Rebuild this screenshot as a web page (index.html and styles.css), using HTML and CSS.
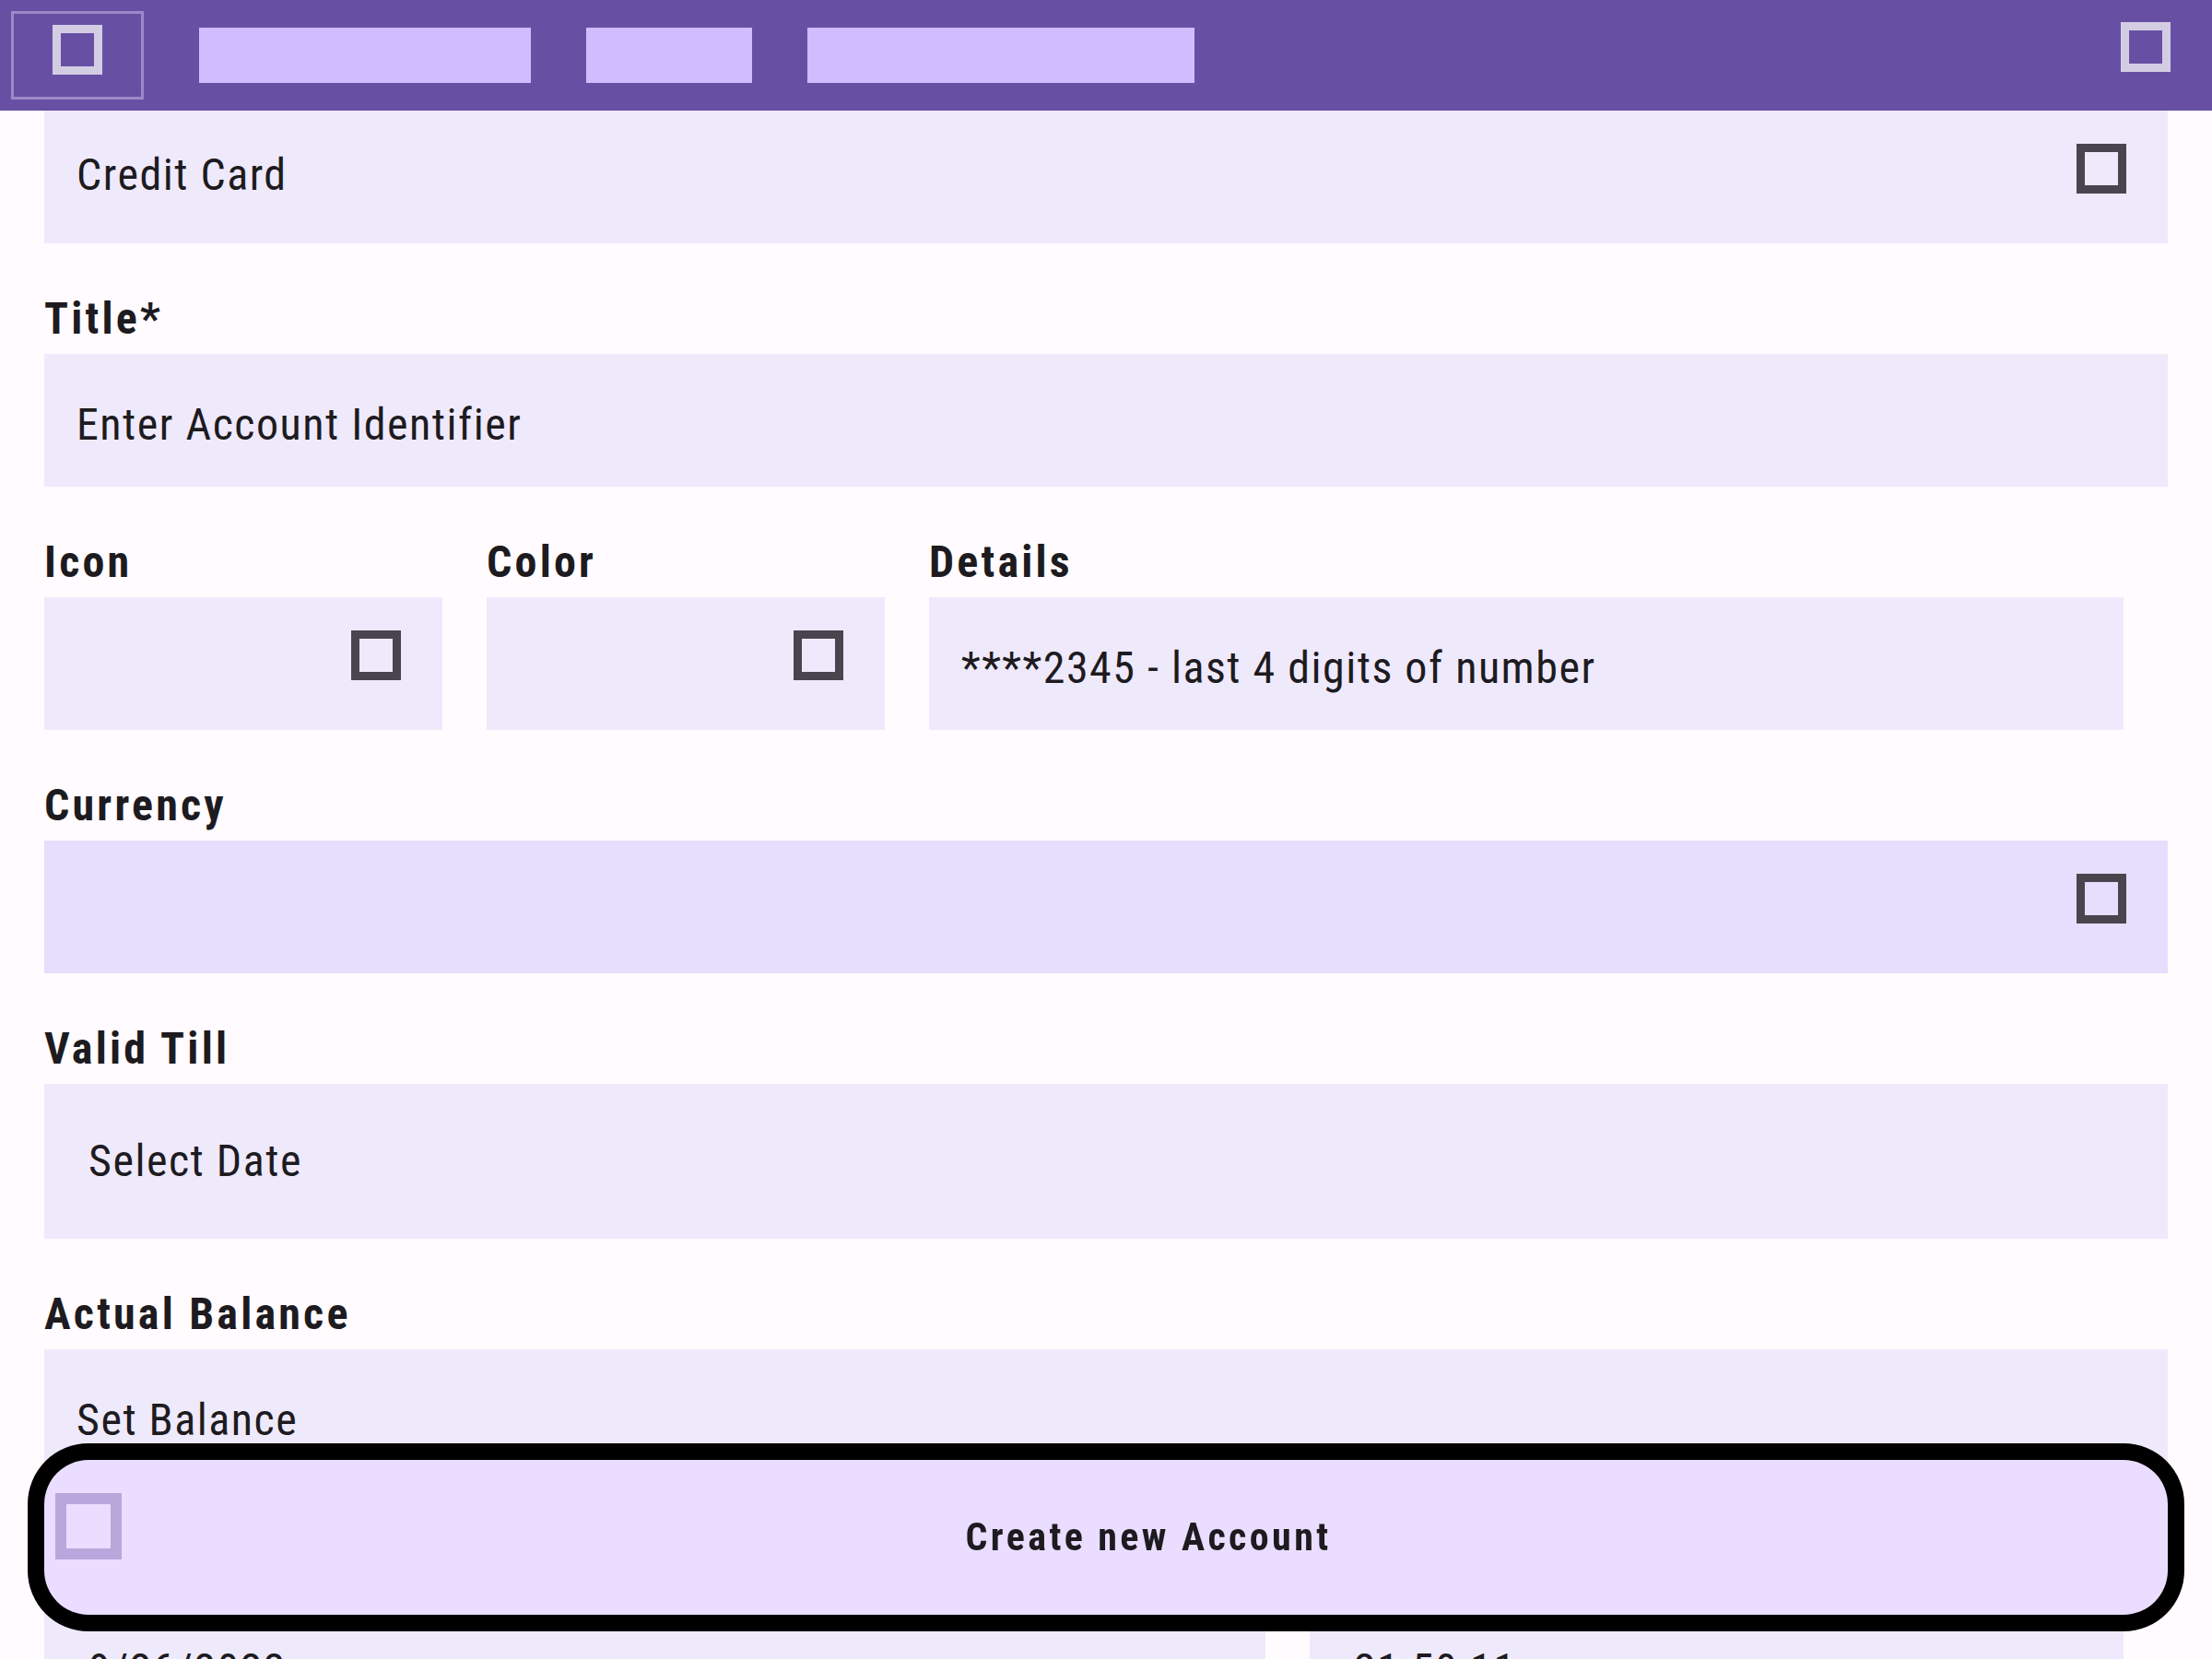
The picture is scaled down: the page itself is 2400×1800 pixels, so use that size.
FILE: index.html
```html
<!DOCTYPE html>
<html lang="en">
<head>
<meta charset="utf-8">
<title>Create new Account</title>
<link rel="stylesheet" href="styles.css">
</head>
<body>
<header class="appbar">
  <div class="nav-btn"><span class="glyph glyph-light"></span></div>
  <nav class="tabs">
    <span class="tab tab-wide"></span>
    <span class="tab tab-small"></span>
    <span class="tab tab-large"></span>
  </nav>
  <span class="glyph glyph-light appbar-action"></span>
</header>

<main class="form">
  <div class="field field-select">
    <span class="field-text">Credit Card</span>
    <span class="glyph glyph-dark field-icon"></span>
  </div>

  <label class="label">Title*</label>
  <div class="field">
    <span class="field-text">Enter Account Identifier</span>
  </div>

  <div class="row row-three">
    <div class="col">
      <label class="label">Icon</label>
      <div class="field field-compact">
        <span class="field-text"></span>
        <span class="glyph glyph-dark field-icon"></span>
      </div>
    </div>
    <div class="col">
      <label class="label">Color</label>
      <div class="field field-compact">
        <span class="field-text"></span>
        <span class="glyph glyph-dark field-icon"></span>
      </div>
    </div>
    <div class="col">
      <label class="label">Details</label>
      <div class="field">
        <span class="field-text">****2345 - last 4 digits of number</span>
      </div>
    </div>
  </div>

  <label class="label">Currency</label>
  <div class="field field-strong">
    <span class="field-text"></span>
    <span class="glyph glyph-dark field-icon"></span>
  </div>

  <label class="label">Valid Till</label>
  <div class="field field-date">
    <span class="field-text">Select Date</span>
  </div>

  <label class="label">Actual Balance</label>
  <div class="field">
    <span class="field-text">Set Balance</span>
  </div>

  <div class="row row-two">
    <div class="col">
      <label class="label">&nbsp;</label>
      <div class="field field-date">
        <span class="field-text">9/26/2023</span>
      </div>
    </div>
    <div class="col">
      <label class="label">&nbsp;</label>
      <div class="field field-date">
        <span class="field-text">21:50:11</span>
      </div>
    </div>
  </div>
</main>

<button class="fab-wide" type="button">
  <span class="glyph glyph-soft fab-icon"></span>
  <span class="fab-label">Create new Account</span>
</button>
</body>
</html>
```

FILE: styles.css
```css
html, body {
  margin: 0;
  padding: 0;
}

body {
  width: 2400px;
  height: 1800px;
  overflow: hidden;
  background: #fffbfe;
  color: #1d1b20;
  font-family: "Roboto Condensed", Roboto, "Noto Sans", "Liberation Sans", sans-serif;
}

/* generic square glyph (missing-icon box) */
.glyph {
  display: block;
  box-sizing: border-box;
  width: 54px;
  height: 54px;
  border: 9px solid currentColor;
  flex: none;
}
.glyph-light { color: #d3cde4; }
.glyph-dark { color: #49454f; }
.glyph-soft { color: #b8a7dc; }

/* ---------- app bar ---------- */
.appbar {
  height: 120px;
  background: #6750a4;
  display: flex;
  align-items: center;
  padding-left: 12px;
  padding-right: 45px;
}

.nav-btn {
  box-sizing: border-box;
  width: 144px;
  height: 96px;
  border: 3px solid #9a8ac8;
  display: flex;
  justify-content: center;
  align-items: flex-start;
  padding-top: 12px;
}

.tabs {
  display: flex;
  gap: 60px;
  margin-left: 60px;
  flex: 1;
}

.tab {
  display: block;
  height: 60px;
  background: #d0bcff;
}
.tab-wide { width: 360px; }
.tab-small { width: 180px; }
.tab-large { width: 420px; }

.appbar-action {
  align-self: flex-start;
  margin-top: 24px;
}

/* ---------- form ---------- */
.form {
  padding: 0 48px;
  display: flex;
  flex-direction: column;
}

.label {
  display: block;
  font-size: 48px;
  line-height: 56px;
  font-weight: 700;
  letter-spacing: 3.2px;
  margin-top: 54px;
  margin-bottom: 10px;
}

.field {
  box-sizing: border-box;
  height: 144px;
  background: #efe9fc;
  display: flex;
  align-items: center;
  justify-content: space-between;
  padding: 9px 45px 0 35px;
}

.field-text {
  font-size: 48px;
  line-height: 56px;
  letter-spacing: 1.5px;
  white-space: nowrap;
}

.field-icon {
  align-self: flex-start;
  margin-top: 27px;
}

.field-select {
  padding-top: 0;
}
.field-select .field-text {
  margin-top: -5px;
}
.field-select .field-icon {
  margin-top: 36px;
}

.field-strong {
  background: #e6defc;
}

.field-date {
  height: 168px;
  padding: 0 45px 0 48px;
}

.row {
  display: grid;
  column-gap: 48px;
  padding-right: 48px;
}
.row-three { grid-template-columns: 1fr 1fr 3fr; }
.row-two { grid-template-columns: 3fr 2fr; }

.col {
  display: flex;
  flex-direction: column;
  min-width: 0;
}

/* ---------- floating wide button ---------- */
.fab-wide {
  position: fixed;
  left: 48px;
  right: 48px;
  bottom: 48px;
  height: 168px;
  margin: 0;
  padding: 0 0 0 12px;
  border: 0;
  border-radius: 48px;
  background: #eaddff;
  box-shadow: 0 0 0 18px #000;
  display: flex;
  align-items: center;
  font-family: inherit;
  color: #1d1b20;
}

.fab-icon {
  width: 72px;
  height: 72px;
  border-width: 12px;
  align-self: flex-start;
  margin-top: 36px;
}

.fab-label {
  flex: 1;
  text-align: center;
  padding-left: 8px;
  font-size: 42px;
  line-height: 56px;
  font-weight: 700;
  letter-spacing: 3.4px;
}
```
